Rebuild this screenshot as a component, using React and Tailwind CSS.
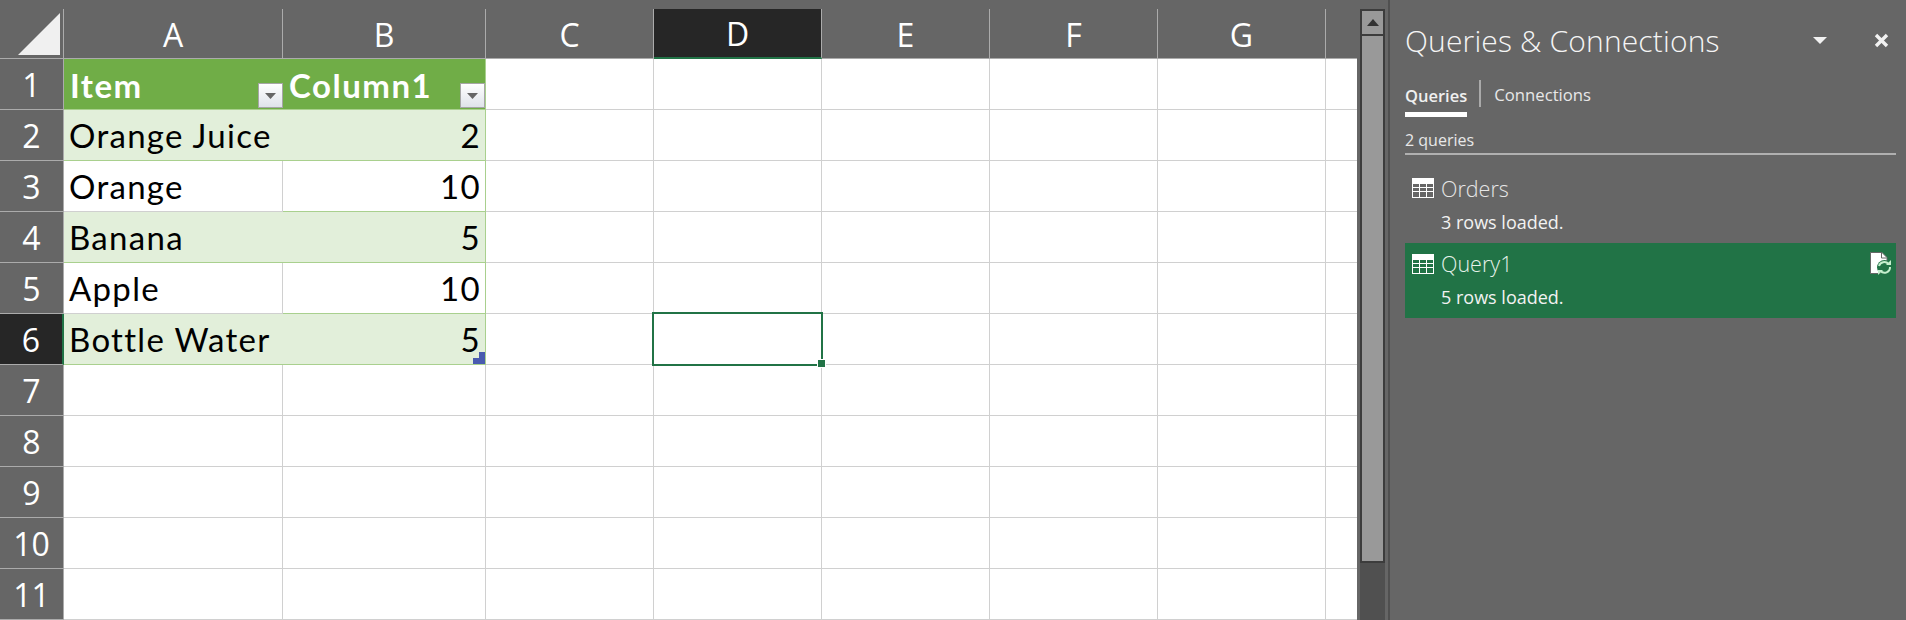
const colLetters = [
  ["A", "w-[219px]"],
  ["B", "w-[203px]"],
  ["C", "w-[168px]"],
  ["D", "w-[168px]"],
  ["E", "w-[168px]"],
  ["F", "w-[168px]"],
  ["G", "w-[168px]"],
];

const rows = [
  { n: 1, kind: "head", a: "Item", b: "Column1" },
  { n: 2, kind: "band", a: "Orange Juice", b: "2" },
  { n: 3, kind: "plain", a: "Orange", b: "10" },
  { n: 4, kind: "band", a: "Banana", b: "5" },
  { n: 5, kind: "plain", a: "Apple", b: "10" },
  { n: 6, kind: "band", a: "Bottle Water", b: "5" },
  { n: 7 },
  { n: 8 },
  { n: 9 },
  { n: 10 },
  { n: 11 },
];

const segoe = "font-['Open_Sans','Noto_Sans',sans-serif]";
const calibri = "font-['Lato','Liberation_Sans',sans-serif]";

function FilterButton() {
  return (
    <div className="absolute right-0 bottom-[1px] w-[25px] h-[25px] border border-[#a6a6a6] bg-gradient-to-b from-white to-[#dfe3ea] flex items-center justify-center">
      <svg width="11" height="6" viewBox="0 0 11 6"><path d="M0 0H11L5.5 6Z" fill="#666666" /></svg>
    </div>
  );
}

function TableCell({ row, col }) {
  const { kind } = row;
  const text = col === "a" ? row.a : row.b;
  const width = col === "a" ? "w-[219px]" : "w-[203px]";
  if (kind === "head") {
    return (
      <div className={`relative ${width} h-full bg-[#70ad47] border-b border-[#a9d08e] ${col === "b" ? "border-r" : ""} pl-[6px] flex items-center text-white font-bold text-[33px] leading-none tracking-[1.5px] ${calibri}`}>
        <span className="mt-[3px]">{text}</span>
        <FilterButton />
      </div>
    );
  }
  const bg = kind === "band" ? "bg-[#e2efda]" : "bg-white";
  const rightBorder = col === "b" ? "border-r border-[#a9d08e]" : kind === "plain" ? "border-r border-[#d0d0d0]" : "";
  return (
    <div className={`relative ${width} h-full ${bg} ${rightBorder} border-b border-[#a9d08e] flex items-center text-black text-[33px] leading-none tracking-[1.3px] ${calibri} ${col === "a" ? "pl-[5px]" : "justify-end pr-[4px]"}`}>
      <span className="mt-[1px]">{text}</span>
      {row.n === 6 && col === "b" && (
        <svg className="absolute right-0 bottom-0" width="12" height="12" viewBox="0 0 12 12">
          <path d="M12 0V12H0V6H6V0Z" fill="#4a5bb0" />
        </svg>
      )}
    </div>
  );
}

function Row({ row }) {
  const selected = row.n === 6;
  return (
    <div className="flex h-[51px]">
      <div className={`relative w-[64px] shrink-0 h-full flex items-center justify-center text-white text-[32px] font-normal leading-none border-b border-[#ababab] ${segoe} ${selected ? "bg-[#262626] border-r-2 border-r-[#217346]" : "bg-[#666666] border-r border-r-[#ababab]"}`}>
        <span className="mt-[2px]">{row.n}</span>
      </div>
      {row.kind ? (
        <>
          <TableCell row={row} col="a" />
          <TableCell row={row} col="b" />
        </>
      ) : (
        <>
          <div className="w-[219px] h-full bg-white border-r border-b border-[#d0d0d0]" />
          <div className="w-[203px] h-full bg-white border-r border-b border-[#d0d0d0]" />
        </>
      )}
      {[0, 1, 2, 3, 4].map((i) => (
        <div key={i} className="relative w-[168px] h-full bg-white border-r border-b border-[#d0d0d0]" />
      ))}
      <div className="flex-1 h-full bg-white border-b border-[#d0d0d0]" />
    </div>
  );
}

function TableIcon({ fill }) {
  return (
    <svg width="22" height="20" viewBox="0 0 22 20" className="shrink-0">
      <path d="M0 0H22V20H0Z" fill="#ffffff" />
      <path d="M1 6H7V9H1ZM8 6H14V9H8ZM15 6H21V9H15ZM1 10H7V13H1ZM8 10H14V13H8ZM15 10H21V13H15ZM1 14H7V19H1ZM8 14H14V19H8ZM15 14H21V19H15Z" fill={fill} />
    </svg>
  );
}

function RefreshPage() {
  return (
    <svg width="22" height="23" viewBox="0 0 22 23">
      <path d="M0.5 0.5H12L17 5.5V21.5H0.5Z" fill="#ffffff" stroke="#666666" />
      <path d="M11.5 1V6H16.5" fill="none" stroke="#666666" />
      <circle cx="14.5" cy="15.5" r="7.5" fill="#217346" />
      <path d="M9 14A5.5 5.5 0 0 1 18.5 12" fill="none" stroke="#c6efce" strokeWidth="2" />
      <path d="M20 15A5.5 5.5 0 0 1 10.5 19" fill="none" stroke="#c6efce" strokeWidth="2" />
      <path d="M16 13H21V8Z" fill="#c6efce" />
      <path d="M13 18H8V23Z" fill="#c6efce" />
    </svg>
  );
}

export default function App() {
  return (
    <div className="w-[1906px] h-[620px] bg-[#666666] flex overflow-hidden">
      {/* Sheet */}
      <div className="relative w-[1357px] shrink-0 pt-[9px]">
        <div className="flex h-[50px]">
          <div className="w-[64px] shrink-0 h-full border-b border-[#ababab] border-r border-r-[#ababab] flex items-end justify-end pr-[3px] pb-[3px]">
            <svg width="42" height="42" viewBox="0 0 42 42"><path d="M42 0V42H0Z" fill="#f0f0f0" /></svg>
          </div>
          {colLetters.map(([l, w]) => (
            <div key={l} className={`${w} h-full flex items-center justify-center text-white text-[32px] font-normal leading-none border-r border-r-[#ababab] ${segoe} ${l === "D" ? "bg-[#262626] border-b-2 border-b-[#217346]" : "border-b border-b-[#ababab]"}`}>
              <span className="mt-[2px]">{l}</span>
            </div>
          ))}
          <div className="flex-1 h-full border-b border-[#ababab]" />
        </div>
        {rows.map((r) => (
          <Row key={r.n} row={r} />
        ))}
        {/* Active cell */}
        <div className="absolute left-[652px] top-[312px] w-[171px] h-[54px] border-2 border-[#217346]" />
        <div className="absolute left-[818px] top-[360px] w-[7px] h-[7px] bg-[#217346] outline outline-1 outline-white" />
      </div>

      {/* Scrollbar */}
      <div className="w-[31px] shrink-0 pt-[9px] flex flex-col items-start pl-[3px]">
        <div className="w-[25px] h-full flex flex-col bg-[#505050]">
          <div className="h-[27px] shrink-0 bg-[#999999] border-2 border-[#3c3c3c] flex items-center justify-center">
            <svg width="12" height="7" viewBox="0 0 12 7"><path d="M0 7H12L6 0Z" fill="#333333" /></svg>
          </div>
          <div className="h-[527px] shrink-0 bg-[#999999] border-x-2 border-b-2 border-[#3c3c3c]" />
        </div>
      </div>

      {/* Panel */}
      <div className={`flex-1 border-l-2 border-[#505050] pl-[15px] pr-[10px] ${segoe} text-white`}>
        <div className="h-[80px] flex items-center">
          <span className="mt-[2px] text-[30px] font-light leading-none tracking-[0.15px] text-[#f5f5f5]">Queries &amp; Connections</span>
          <svg className="ml-auto mr-[47px]" width="14" height="7" viewBox="0 0 14 7"><path d="M0 0H14L7 7Z" fill="#f2f2f2" /></svg>
          <svg className="mr-[7px]" width="15" height="15" viewBox="0 0 15 15"><path d="M2 2L13 13M13 2L2 13" stroke="#f2f2f2" strokeWidth="3.4" /></svg>
        </div>
        <div className="flex items-start h-[37px]">
          <div className="flex flex-col items-stretch">
            <span className="h-[32px] flex items-center text-[16.5px] font-semibold leading-none text-[#f0f0f0]">Queries</span>
            <div className="h-[5px] bg-white" />
          </div>
          <div className="w-[2px] h-[27px] bg-[#aaaaaa] ml-[12px] mr-[13px]" />
          <span className="h-[30px] flex items-center text-[16.7px] leading-none text-[#e8e8e8]">Connections</span>
        </div>
        <div className="h-[38px] border-b-2 border-[#b0b0b0] flex items-center pt-[10px] text-[16px] leading-none text-[#e8e8e8]">
          2 queries
        </div>
        <div className="h-[88px] pl-[7px] pt-[22px]">
          <div className="flex items-center gap-[7px] h-[22px]">
            <TableIcon fill="#666666" />
            <span className="mt-[2px] text-[21.5px] font-light leading-none text-[#e6e6e6]">Orders</span>
          </div>
          <div className="pl-[29px] mt-[14px] text-[18px] leading-none text-[#f2f2f2]">3 rows loaded.</div>
        </div>
        <div className="relative h-[75px] bg-[#217346] pl-[7px] pt-[10px]">
          <div className="flex items-center gap-[7px] h-[22px]">
            <TableIcon fill="#217346" />
            <span className="-mt-[1px] text-[21.5px] font-light leading-none text-[#e6f2ea]">Query1</span>
          </div>
          <div className="pl-[29px] mt-[13px] text-[18px] leading-none text-[#f2f2f2]">5 rows loaded.</div>
          <div className="absolute right-[4px] top-[9px]">
            <RefreshPage />
          </div>
        </div>
      </div>
    </div>
  );
}
